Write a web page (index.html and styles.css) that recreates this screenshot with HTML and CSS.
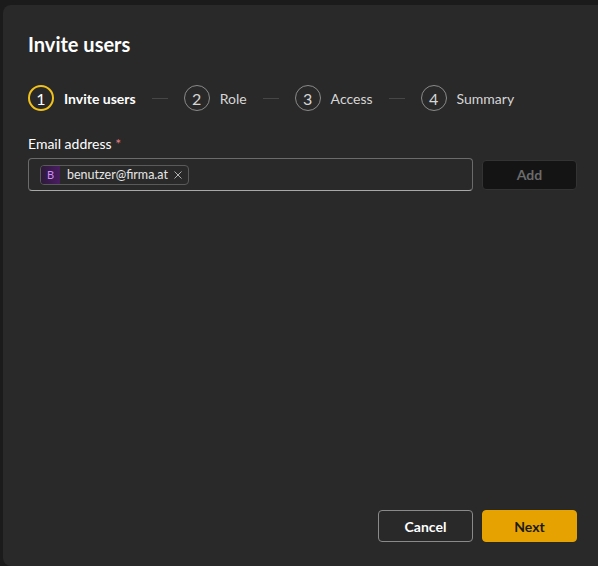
FILE: index.html
```html
<!DOCTYPE html>
<html lang="en">

<head>
	<meta charset="UTF-8" />
	<title>Invite users</title>
	<link rel="stylesheet" href="styles.css">
</head>

<body>
	<div class="dialog">
		<h1 class="dialog-title">Invite users</h1>

		<ol class="steps">
			<li class="step active"><span class="step-num">1</span><span class="step-label">Invite users</span></li>
			<li class="step-line"></li>
			<li class="step"><span class="step-num">2</span><span class="step-label">Role</span></li>
			<li class="step-line"></li>
			<li class="step"><span class="step-num">3</span><span class="step-label">Access</span></li>
			<li class="step-line"></li>
			<li class="step"><span class="step-num">4</span><span class="step-label">Summary</span></li>
		</ol>

		<label class="field-label">Email address <span class="required">*</span></label>
		<div class="field-row">
			<div class="email-input">
				<span class="chip">
					<span class="chip-avatar">B</span>
					<span class="chip-text">benutzer@firma.at</span>
					<svg class="chip-remove" width="8" height="8" viewBox="0 0 8 8">
						<path d="M0.5 0.5 L7.5 7.5 M7.5 0.5 L0.5 7.5" stroke="#b0b0b0" stroke-width="1" fill="none" />
					</svg>
				</span>
			</div>
			<button class="btn btn-add" disabled>Add</button>
		</div>

		<div class="dialog-footer">
			<button class="btn btn-secondary">Cancel</button>
			<button class="btn btn-primary">Next</button>
		</div>
	</div>
</body>

</html>
```

FILE: styles.css
```css
body {
	margin: 0;
	background-color: #1b1b1b;
	font-family: "Lato", "Noto Sans", sans-serif;
	color: #ffffff;
	overflow: hidden;
	height: 566px;
}

.dialog {
	box-sizing: border-box;
	margin: 5px 0 0 3px;
	width: 620px;
	height: 561px;
	background-color: #292929;
	border-radius: 8px;
	padding: 25px 0 24px 25px;
	display: flex;
	flex-direction: column;
}

.dialog-title {
	margin: 0;
	font-size: 20px;
	line-height: 28px;
	font-weight: 700;
}

.steps {
	list-style: none;
	margin: 27px 0 0 0;
	padding: 0;
	display: flex;
	align-items: center;
	height: 26px;
}

.step {
	display: flex;
	align-items: center;
	gap: 10px;
}

.step-num {
	box-sizing: border-box;
	width: 26px;
	height: 26px;
	border: 1px solid #8a8a8a;
	border-radius: 50%;
	display: flex;
	align-items: center;
	justify-content: center;
	font-size: 16px;
	color: #d6d6d6;
}

.step-label {
	font-size: 14px;
	color: #d6d6d6;
}

.step.active .step-num {
	border: 2px solid #f1c21b;
	color: #ffffff;
}

.step.active .step-label {
	color: #ffffff;
	font-weight: 700;
}

.step-line {
	width: 16px;
	height: 1px;
	background-color: #474747;
	margin: 0 16px;
}

.field-label {
	margin-top: 23px;
	font-size: 14px;
	line-height: 20px;
	color: #ffffff;
}

.required {
	color: #e37d80;
}

.field-row {
	margin-top: 4px;
	display: flex;
	align-items: center;
	gap: 9px;
}

.email-input {
	box-sizing: border-box;
	width: 445px;
	height: 33px;
	border: 1px solid #6b6b6b;
	border-bottom-color: #a8a8a8;
	border-radius: 4px;
	padding: 0 11px;
	display: flex;
	align-items: center;
}

.chip {
	box-sizing: border-box;
	height: 20px;
	display: flex;
	align-items: center;
	border: 1px solid #5a5a5a;
	border-radius: 4px;
	padding-right: 6px;
}

.chip-avatar {
	width: 19px;
	height: 18px;
	background: linear-gradient(90deg, #2c1a38, #4a1c63);
	color: #d08cff;
	font-size: 11px;
	display: flex;
	align-items: center;
	justify-content: center;
	border-radius: 3px 0 0 3px;
}

.chip-text {
	margin-left: 7px;
	font-size: 12.5px;
	color: #e6e6e6;
}

.chip-remove {
	margin-left: 6px;
}

.btn {
	box-sizing: border-box;
	width: 95px;
	font-family: inherit;
	font-size: 14px;
	font-weight: 700;
	border-radius: 4px;
	cursor: pointer;
}

.btn-add {
	height: 30px;
	background-color: #141414;
	border: 1px solid #333333;
	color: #6b6b6b;
}

.dialog-footer {
	margin-top: auto;
	display: flex;
	gap: 9px;
	padding-left: 350px;
}

.btn-secondary {
	height: 32px;
	background-color: transparent;
	border: 1px solid #8a8a8a;
	color: #ffffff;
}

.btn-primary {
	height: 32px;
	background-color: #e5a200;
	border: 1px solid #e5a200;
	color: #1a1a1a;
}
```
